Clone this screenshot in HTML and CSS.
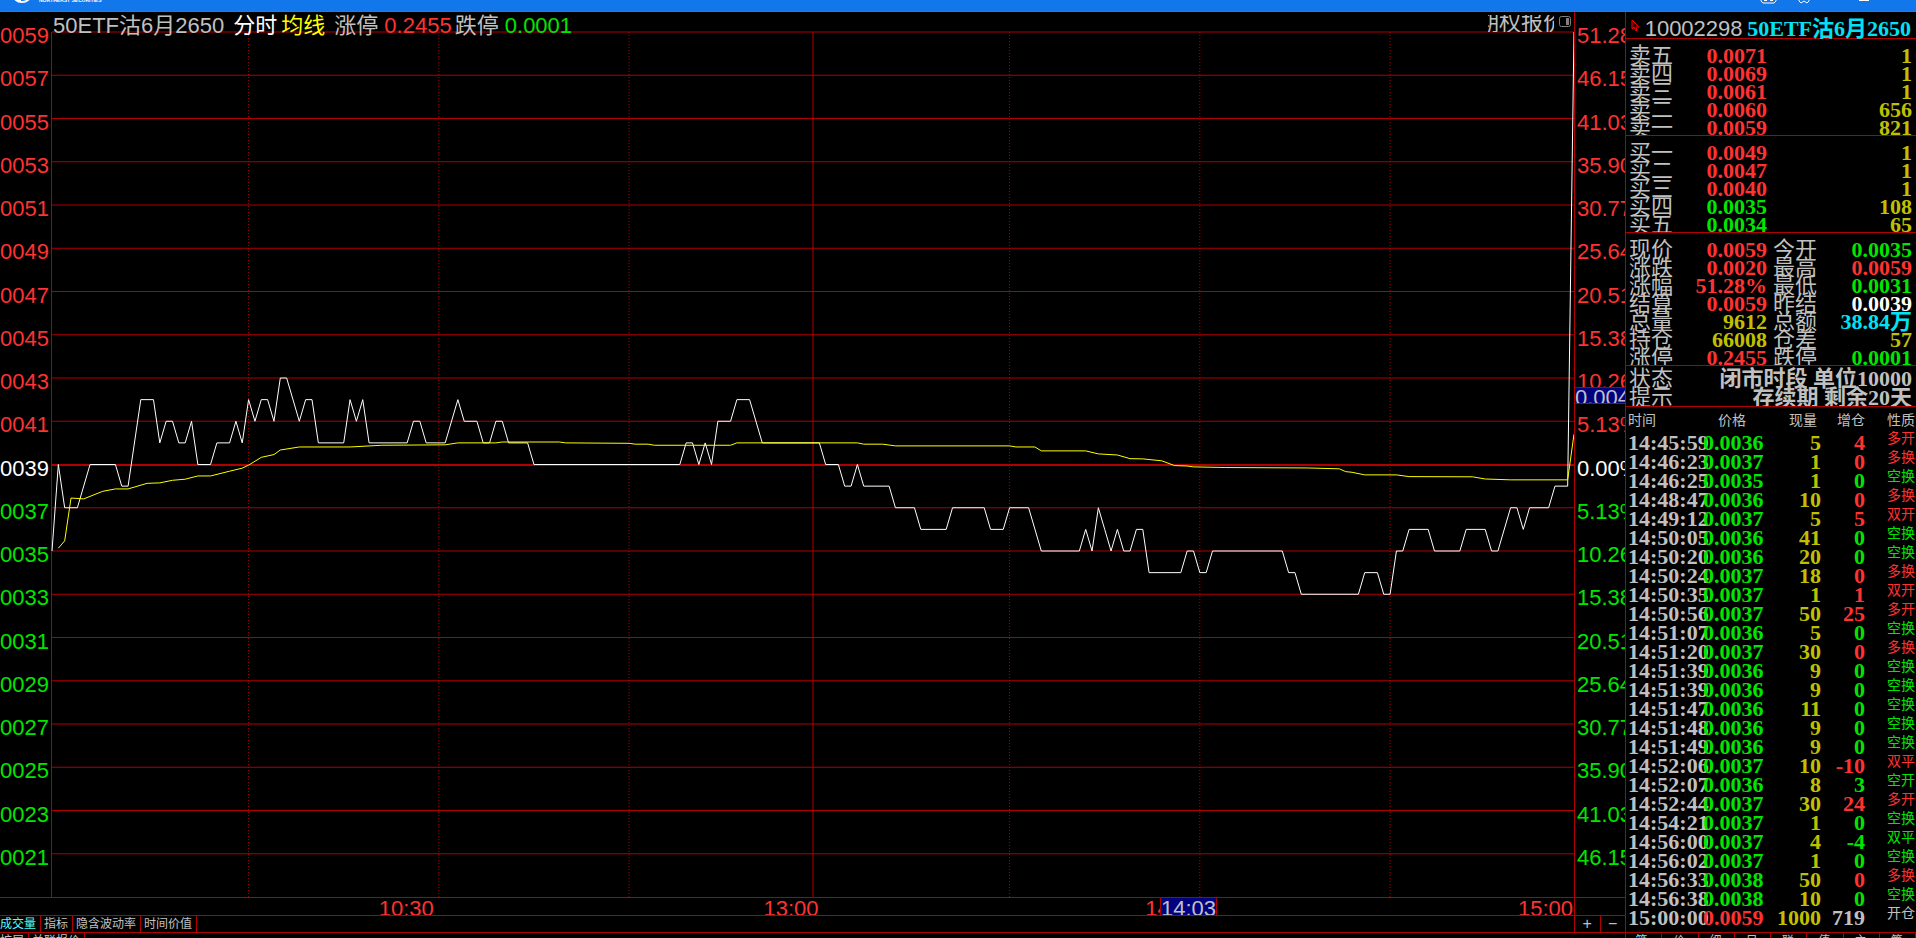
FILE: index.html
```html
<!DOCTYPE html>
<html lang="zh-CN">
<head>
    <meta charset="UTF-8">
    <meta name="viewport" content="width=device-width, initial-scale=1.0">
    <title>50ETF沽6月2650</title>
    <link rel="stylesheet" href="styles.css">
</head>
<body>
    <header class="titlebar">
        <div class="brand">
            <svg class="logo" width="22" height="11" viewBox="0 0 22 11">
                <ellipse cx="12" cy="-6" rx="9" ry="8" fill="none" stroke="#fff" stroke-width="2"/>
                <path d="M8 0h3v1h-3z" fill="#fff"/>
            </svg>
            <span class="brand-name">NORTHEAST SECURITIES</span>
        </div>
        <div class="window-buttons">
            <button aria-label="布局">
                <svg width="17" height="11" viewBox="0 0 17 11"><path d="M1 -4v5l2 2h11l2-2v-5" fill="none" stroke="#fff" stroke-width="1"/><path d="M4 0h3v1h-3zM10 0h3v1h-3z" fill="#fff"/></svg>
            </button>
            <button aria-label="换肤">
                <svg width="14" height="11" viewBox="0 0 14 11"><path d="M2 -2v3l2 2 3-2 3 2 2-2v-3" fill="none" stroke="#fff" stroke-width="1"/></svg>
            </button>
            <button aria-label="最小化">
                <svg width="10" height="11" viewBox="0 0 10 11"><path d="M0 0h10" stroke="#fff" stroke-width="2"/></svg>
            </button>
        </div>
    </header>

    <div class="main">
        <main class="chart">
            <div class="chart-head">
                <h1>50ETF沽6月2650</h1>
                <span class="white">分时</span>
                <span class="bright">均线</span>
                <span class="limits">涨停 <b class="up">0.2455</b></span>
                <span>跌停 <b class="down">0.0001</b></span>
                <button class="quote-button">期权报价</button>
                <button class="side-button" aria-label="侧栏">
                    <svg width="12" height="12" viewBox="0 0 12 12"><rect x="0.5" y="0.5" width="11" height="10" rx="2" fill="none" stroke="#808080"/><path d="M7 2h3v7h-3z" fill="#808080"/></svg>
                </button>
            </div>
            <div class="head-corner"></div>

            <div class="axis price-axis">
                <span class="up">0059</span>
                <span class="up">0057</span>
                <span class="up">0055</span>
                <span class="up">0053</span>
                <span class="up">0051</span>
                <span class="up">0049</span>
                <span class="up">0047</span>
                <span class="up">0045</span>
                <span class="up">0043</span>
                <span class="up">0041</span>
                <span class="white">0039</span>
                <span class="down">0037</span>
                <span class="down">0035</span>
                <span class="down">0033</span>
                <span class="down">0031</span>
                <span class="down">0029</span>
                <span class="down">0027</span>
                <span class="down">0025</span>
                <span class="down">0023</span>
                <span class="down">0021</span>
            </div>

            <!-- x: minutes of trading, y: ticks below 0.0059 -->
            <div class="plot">
                <svg viewBox="0 0 240 40" preserveAspectRatio="none">
                    <path class="grid" d="M0 0H240M0 2H240M0 4H240M0 6H240M0 8H240M0 10H240M0 12H240M0 14H240M0 16H240M0 18H240M0 22H240M0 24H240M0 26H240M0 28H240M0 30H240M0 32H240M0 34H240M0 36H240M0 38H240M120 0V40"/>
                    <path class="grid dotted" d="M31 0V40M61 0V40M91 0V40M151 0V40M181 0V40M211 0V40"/>
                    <path class="grid middle" d="M0 20H240"/>
                    <polyline class="price-line" points="0,24 1,20 2,22 4,22 6,20 10,20 11,21 12,21 14,17 16,17 17,19 18,18 19,18 20,19 21,19 22,18 23,20 25,20 26,19 28,19 29,18 30,19 31,17 32,18 33,17 34,17 35,18 36,16 37,16 39,18 40,17 41,17 42,19 46,19 47,17 48,18 49,17 50,19 56,19 57,18 58,18 59,19 62,19 64,17 65,18 67,18 68,19 69,19 70,18 71,18 72,19 75,19 76,20 99,20 100,19 101,19 102,20 103,19 104,20 105,18 107,18 108,17 110,17 112,19 121,19 122,20 124,20 125,21 126,21 127,20 128,21 132,21 133,22 136,22 137,23 141,23 142,22 147,22 148,23 150,23 151,22 154,22 156,24 162,24 163,23 164,24 165,22 166,23 167,24 168,23 169,24 170,24 171,23 172,23 173,25 178,25 179,24 180,24 181,25 182,25 183,24 194,24 195,25 196,25 197,26 206,26 207,25 209,25 210,26 211,26 212,24 213,24 214,23 217,23 218,24 222,24 223,23 226,23 227,24 228,24 230,22 231,22 232,23 233,22 236,22 237,21 239,21 240,0"/>
                    <polyline class="average-line" points="1,23.87 2,23.53 3,21.55 5,21.59 8,21.24 10,21.13 12,21.13 15,20.87 17,20.85 19,20.73 21,20.68 23,20.53 25,20.53 28,20.31 30,20.17 31,20.03 33,19.67 35,19.54 36,19.33 39,19.19 47,19.19 52,19.11 62,19.09 64,19 70,19 71,18.96 80,18.96 81,19 91,19.02 92,19.06 94,19.06 95,19.11 107,19.11 108,19 127,19 128,19.06 131,19.06 133,19.14 151,19.14 152,19.19 155,19.19 156,19.37 163,19.37 165,19.51 168,19.56 170,19.73 172,19.74 175,19.83 177,20.05 179,20.07 180,20.11 185,20.14 198,20.16 203,20.2 204,20.33 205,20.36 207,20.48 212,20.48 214,20.56 224,20.57 226,20.67 230,20.71 239,20.71 240,18.6"/>
                </svg>
            </div>

            <div class="axis percent-axis">
                <span class="up">51.28%</span>
                <span class="up">46.15%</span>
                <span class="up">41.03%</span>
                <span class="up">35.90%</span>
                <span class="up">30.77%</span>
                <span class="up">25.64%</span>
                <span class="up">20.51%</span>
                <span class="up">15.38%</span>
                <span class="up">10.26%</span>
                <span class="up">5.13%</span>
                <span class="white">0.00%</span>
                <span class="down">5.13%</span>
                <span class="down">10.26%</span>
                <span class="down">15.38%</span>
                <span class="down">20.51%</span>
                <span class="down">25.64%</span>
                <span class="down">30.77%</span>
                <span class="down">35.90%</span>
                <span class="down">41.03%</span>
                <span class="down">46.15%</span>
                <div class="cursor-price">0.0042</div>
            </div>

            <div class="time-axis">
                <span>10:30</span>
                <span>13:00</span>
                <span>14:00</span>
                <span>15:00</span>
                <div class="cursor-time">14:03</div>
            </div>
            <div class="time-corner"></div>

            <nav class="tabs">
                <a href="#" class="active">成交量</a>
                <a href="#">指标</a>
                <a href="#">隐含波动率</a>
                <a href="#">时间价值</a>
            </nav>
            <div class="zoom-buttons">
                <button>+</button>
                <button>−</button>
            </div>

            <nav class="tabs more-tabs">
                <a href="#">扩展</a>
                <a href="#">关联报价</a>
            </nav>
        </main>

        <aside class="panel">
            <div class="panel-head">
                <svg width="9" height="14" viewBox="0 0 9 14"><path d="M1 1v9l2-2 2 4 1-1-1-3h3z" fill="#300" stroke="#f00"/></svg>
                <span class="code">10002298</span>
                <h2>50ETF沽6月2650</h2>
            </div>

            <dl class="depth">
                <dt>卖五</dt><dd class="up">0.0071</dd><dd class="amount">1</dd>
                <dt>卖四</dt><dd class="up">0.0069</dd><dd class="amount">1</dd>
                <dt>卖三</dt><dd class="up">0.0061</dd><dd class="amount">1</dd>
                <dt>卖二</dt><dd class="up">0.0060</dd><dd class="amount">656</dd>
                <dt>卖一</dt><dd class="up">0.0059</dd><dd class="amount">821</dd>
            </dl>
            <dl class="depth">
                <dt>买一</dt><dd class="up">0.0049</dd><dd class="amount">1</dd>
                <dt>买二</dt><dd class="up">0.0047</dd><dd class="amount">1</dd>
                <dt>买三</dt><dd class="up">0.0040</dd><dd class="amount">1</dd>
                <dt>买四</dt><dd class="down">0.0035</dd><dd class="amount">108</dd>
                <dt>买五</dt><dd class="down">0.0034</dd><dd class="amount">65</dd>
            </dl>

            <dl class="quote">
                <dt>现价</dt><dd class="up">0.0059</dd><dt>今开</dt><dd class="down">0.0035</dd>
                <dt>涨跌</dt><dd class="up">0.0020</dd><dt>最高</dt><dd class="up">0.0059</dd>
                <dt>涨幅</dt><dd class="up">51.28%</dd><dt>最低</dt><dd class="down">0.0031</dd>
                <dt>结算</dt><dd class="up">0.0059</dd><dt>昨结</dt><dd class="white">0.0039</dd>
                <dt>总量</dt><dd class="amount">9612</dd><dt>总额</dt><dd class="cyan">38.84万</dd>
                <dt>持仓</dt><dd class="amount">66008</dd><dt>仓差</dt><dd class="amount">57</dd>
                <dt>涨停</dt><dd class="up">0.2455</dd><dt>跌停</dt><dd class="down">0.0001</dd>
            </dl>

            <dl class="status">
                <dt>状态</dt><dd>闭市时段 单位10000</dd>
                <dt>提示</dt><dd>存续期 剩余20天</dd>
            </dl>

            <div class="ticks-box">
                <table class="ticks">
                    <thead>
                        <tr><th class="time">时间</th><th class="price">价格</th><th class="volume">现量</th><th class="change">增仓</th><th class="kind">性质</th></tr>
                    </thead>
                    <tbody>
                        <tr><td>14:45:59</td><td class="down">0.0036</td><td class="amount">5</td><td class="up">4</td><td class="up">多开</td></tr>
                        <tr><td>14:46:23</td><td class="down">0.0037</td><td class="amount">1</td><td class="up">0</td><td class="up">多换</td></tr>
                        <tr><td>14:46:25</td><td class="down">0.0035</td><td class="amount">1</td><td class="down">0</td><td class="down">空换</td></tr>
                        <tr><td>14:48:47</td><td class="down">0.0036</td><td class="amount">10</td><td class="up">0</td><td class="up">多换</td></tr>
                        <tr><td>14:49:12</td><td class="down">0.0037</td><td class="amount">5</td><td class="up">5</td><td class="up">双开</td></tr>
                        <tr><td>14:50:05</td><td class="down">0.0036</td><td class="amount">41</td><td class="down">0</td><td class="down">空换</td></tr>
                        <tr><td>14:50:20</td><td class="down">0.0036</td><td class="amount">20</td><td class="down">0</td><td class="down">空换</td></tr>
                        <tr><td>14:50:24</td><td class="down">0.0037</td><td class="amount">18</td><td class="up">0</td><td class="up">多换</td></tr>
                        <tr><td>14:50:35</td><td class="down">0.0037</td><td class="amount">1</td><td class="up">1</td><td class="up">双开</td></tr>
                        <tr><td>14:50:56</td><td class="down">0.0037</td><td class="amount">50</td><td class="up">25</td><td class="up">多开</td></tr>
                        <tr><td>14:51:07</td><td class="down">0.0036</td><td class="amount">5</td><td class="down">0</td><td class="down">空换</td></tr>
                        <tr><td>14:51:20</td><td class="down">0.0037</td><td class="amount">30</td><td class="up">0</td><td class="up">多换</td></tr>
                        <tr><td>14:51:39</td><td class="down">0.0036</td><td class="amount">9</td><td class="down">0</td><td class="down">空换</td></tr>
                        <tr><td>14:51:39</td><td class="down">0.0036</td><td class="amount">9</td><td class="down">0</td><td class="down">空换</td></tr>
                        <tr><td>14:51:47</td><td class="down">0.0036</td><td class="amount">11</td><td class="down">0</td><td class="down">空换</td></tr>
                        <tr><td>14:51:48</td><td class="down">0.0036</td><td class="amount">9</td><td class="down">0</td><td class="down">空换</td></tr>
                        <tr><td>14:51:49</td><td class="down">0.0036</td><td class="amount">9</td><td class="down">0</td><td class="down">空换</td></tr>
                        <tr><td>14:52:06</td><td class="down">0.0037</td><td class="amount">10</td><td class="up">-10</td><td class="up">双平</td></tr>
                        <tr><td>14:52:07</td><td class="down">0.0036</td><td class="amount">8</td><td class="down">3</td><td class="down">空开</td></tr>
                        <tr><td>14:52:44</td><td class="down">0.0037</td><td class="amount">30</td><td class="up">24</td><td class="up">多开</td></tr>
                        <tr><td>14:54:21</td><td class="down">0.0037</td><td class="amount">1</td><td class="down">0</td><td class="down">空换</td></tr>
                        <tr><td>14:56:00</td><td class="down">0.0037</td><td class="amount">4</td><td class="down">-4</td><td class="down">双平</td></tr>
                        <tr><td>14:56:02</td><td class="down">0.0037</td><td class="amount">1</td><td class="down">0</td><td class="down">空换</td></tr>
                        <tr><td>14:56:33</td><td class="down">0.0038</td><td class="amount">50</td><td class="up">0</td><td class="up">多换</td></tr>
                        <tr><td>14:56:38</td><td class="down">0.0038</td><td class="amount">10</td><td class="down">0</td><td class="down">空换</td></tr>
                        <tr><td>15:00:00</td><td class="up">0.0059</td><td class="amount">1000</td><td>719</td><td>开仓</td></tr>
                    </tbody>
                </table>
            </div>

            <nav class="tabs panel-tabs">
                <a href="#" class="active">笔</a>
                <a href="#">价</a>
                <a href="#">细</a>
                <a href="#">日</a>
                <a href="#">联</a>
                <a href="#">值</a>
                <a href="#">主</a>
                <a href="#">筹</a>
            </nav>
        </aside>
    </div>
</body>
</html>
```
FILE: styles.css
```css
* {
    box-sizing: border-box;
}
body {
    display: flex;
    flex-direction: column;
    height: 100vh;
    margin: 0;
    overflow: hidden;
    background-color: #000;
    color: #c0c0c0;
    font-family: "Liberation Sans", "Noto Sans CJK SC", sans-serif;
    font-size: 22px;
}
h1, h2, dl, dd {
    margin: 0;
    font-size: 22px;
}
h1, b {
    font-weight: normal;
}
button {
    padding: 0;
    border: none;
    background: none;
    color: inherit;
    font: inherit;
}
a {
    color: inherit;
    text-decoration: none;
}
.up {
    color: #ff3232;
}
.down {
    color: #00e600;
}
.white {
    color: #fff;
}
.bright {
    color: #ff0;
}
.amount {
    color: #c0c000;
}
.cyan {
    color: #02e2f4;
}

/* title bar */
.titlebar {
    display: flex;
    justify-content: space-between;
    flex: none;
    height: 12px;
    padding: 0 47px 0 10px;
    border-bottom: 1px solid #607080;
    background-color: #1277eb;
    overflow: hidden;
}
.brand {
    display: flex;
    gap: 7px;
}
.brand-name {
    color: #fff;
    font-size: 5px;
    font-weight: bold;
    line-height: 1px;
}
.window-buttons {
    display: flex;
    align-items: flex-start;
    gap: 20px;
}
.window-buttons svg, .side-button svg {
    display: block;
}
.window-buttons button:last-child {
    margin-left: 28px;
}

.main {
    display: flex;
    flex: 1;
    min-height: 0;
}

/* chart */
.chart {
    display: grid;
    grid-template-columns: 51px minmax(0, 1fr) 51px;
    grid-template-rows: 20px minmax(0, 1fr) 18px 17px 6px;
    flex: 1;
    min-width: 0;
}
.chart-head {
    display: flex;
    grid-column: 1 / 3;
    z-index: 1;
    padding: 3px 0 0 53px;
    line-height: 22px;
    white-space: nowrap;
}
.chart-head h1 {
    margin-right: 9px;
}
.chart-head .bright {
    margin: 0 9px 0 4px;
}
.limits {
    margin-right: 3px;
}
.chart-head .quote-button {
    display: flex;
    justify-content: center;
    width: 66px;
    height: 17px;
    margin-left: auto;
    overflow: hidden;
    line-height: 15px;
}
.side-button {
    align-self: flex-start;
    margin: 1px 3px 0 5px;
}
.head-corner {
    border-left: 1px solid #b00000;
}
.axis {
    display: flex;
    flex-direction: column;
    overflow-x: clip;
    line-height: 8px;
}
.axis span {
    flex: 1;
}
.price-axis {
    padding-right: 5px;
    text-align: right;
}
.percent-axis {
    position: relative;
    padding-left: 2px;
    border-left: 1px solid #b00000;
}
.plot {
    min-height: 0;
    border-left: 1px solid #b00000;
}
.plot svg {
    display: block;
    width: 100%;
    height: 100%;
    overflow: visible;
    fill: none;
    shape-rendering: crispEdges;
}
.plot path, .plot polyline {
    vector-effect: non-scaling-stroke;
}
.grid {
    stroke: #b00000;
}
.dotted {
    stroke-dasharray: 1 2;
}
.middle {
    stroke-width: 2;
}
.price-line {
    stroke: #fff;
}
.average-line {
    stroke: #ff0;
}
.cursor-price {
    position: absolute;
    top: 41%;
    left: 0;
    width: 100%;
    height: 17px;
    overflow: hidden;
    border: 1px solid #b00000;
    border-width: 1px 0;
    background-color: #000080;
    line-height: 20px;
}
.time-axis {
    position: relative;
    display: grid;
    grid-template-columns: 383fr 385fr 382fr 373fr;
    grid-column: 1 / 3;
    padding: 0 1px 0 51px;
    overflow: hidden;
    border-top: 1px solid #b00000;
    color: #ff3232;
    line-height: 22px;
    text-align: right;
}
.time-corner {
    border-top: 1px solid #b00000;
    border-left: 1px solid #b00000;
}
.cursor-time {
    position: absolute;
    top: 0;
    left: 73.7%;
    border-right: 1px solid #b00000;
    border-left: 1px solid #b00000;
    background-color: #000080;
    color: #c0c0c0;
    line-height: 21px;
}
.tabs {
    display: flex;
    grid-column: 1 / 3;
    overflow: hidden;
    border-top: 1px solid #b00000;
    font-size: 12px;
    line-height: 17px;
}
.tabs a {
    padding: 0 4px 0 3px;
    border-right: 1px solid #b00000;
}
.tabs a:first-child {
    padding-left: 0;
}
.tabs .active {
    color: #54fcfc;
}
.zoom-buttons {
    display: grid;
    grid-template-columns: 1fr 1fr;
    border-top: 1px solid #b00000;
    font-size: 16px;
    line-height: 14px;
}
.zoom-buttons button {
    border-left: 1px solid #b00000;
}
.chart .more-tabs {
    grid-column: 1 / 4;
}

/* quote panel */
.panel {
    display: flex;
    flex-direction: column;
    flex: none;
    width: 291px;
    border-left: 1px solid #b00000;
    font-family: "Liberation Serif", "Noto Sans CJK SC", serif;
    font-weight: bold;
}
.panel-head {
    display: flex;
    align-items: center;
    justify-content: space-between;
    flex: none;
    height: 27px;
    padding: 7px 5px 0 5px;
    border-bottom: 1px solid #b00000;
    line-height: 20px;
    white-space: nowrap;
}
.panel-head svg {
    align-self: flex-start;
}
.panel-head h2 {
    color: #02e2f4;
}
.code {
    font-family: "Liberation Sans", sans-serif;
    font-weight: normal;
}
.panel dl {
    display: grid;
    flex: none;
    padding: 8px 4px 0 3px;
    overflow: hidden;
    border-bottom: 1px solid #b00000;
    line-height: 18px;
    white-space: nowrap;
}
.panel dt {
    font-weight: normal;
}
.panel dd {
    text-align: right;
}
.panel .depth {
    grid-template-columns: 46px 92px 1fr;
    grid-auto-rows: 18px;
    height: 97px;
}
.panel .quote {
    grid-template-columns: 46px 92px 46px 1fr;
    grid-auto-rows: 18px;
    height: 133px;
}
.quote dt:nth-of-type(even) {
    padding-left: 6px;
}
.panel .status {
    grid-template-columns: 46px 1fr;
    grid-auto-rows: 19px;
    height: 41px;
    padding-top: 3px;
    line-height: 19px;
}
.ticks-box {
    flex: 1;
    min-height: 0;
    overflow: hidden;
}
.ticks {
    width: 100%;
    padding: 0 1px 0 2px;
    border-spacing: 0;
    table-layout: fixed;
    line-height: 19px;
    text-align: right;
    white-space: nowrap;
}
.ticks th, .ticks td {
    height: 19px;
    padding: 0;
}
.ticks th {
    height: 26px;
    font-size: 14px;
    font-weight: normal;
}
.ticks td:first-child, .ticks .time {
    text-align: left;
}
.ticks .time {
    width: 75px;
}
.ticks .price {
    width: 60px;
    padding-right: 17px;
}
.ticks .volume {
    width: 58px;
    padding-right: 4px;
}
.ticks .change {
    width: 44px;
}
.ticks td:last-child {
    font-size: 14px;
    font-weight: normal;
    line-height: 12px;
    vertical-align: top;
}
.panel-tabs {
    display: grid;
    grid-template-columns: repeat(8, 1fr);
    flex: none;
    height: 6px;
    font-family: "Liberation Sans", "Noto Sans CJK SC", sans-serif;
    font-weight: normal;
    text-align: center;
}
```
